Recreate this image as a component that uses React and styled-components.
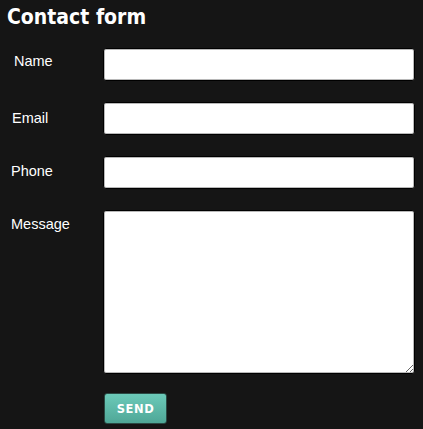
import { Fragment } from "react";
import styled, { createGlobalStyle } from "styled-components";

const Global = createGlobalStyle`
  html, body {
    margin: 0;
    padding: 0;
    background: #151515;
  }
  body {
    font-family: "Liberation Sans", Arial, sans-serif;
    color: #fff;
  }
`;

const Page = styled.div`
  width: 423px;
  height: 429px;
  background: #151515;
  overflow: hidden;
`;

const Title = styled.h1`
  margin: 0;
  padding: 5px 0 0 7px;
  font-family: "DejaVu Sans Condensed", "DejaVu Sans", sans-serif;
  font-stretch: condensed;
  font-weight: 700;
  font-size: 21px;
  line-height: 24px;
  color: #fff;
`;

const Form = styled.form`
  display: grid;
  grid-template-columns: 103px 312px;
  row-gap: 21px;
  padding-top: 19px;
`;

const Label = styled.label`
  font-size: 14.5px;
  color: #fff;
  padding-left: ${(p) => p.$indent}px;
  padding-top: ${(p) => p.$top}px;
`;

const Input = styled.input`
  box-sizing: border-box;
  width: 312px;
  height: 33px;
  margin: 0;
  background: #fff;
  border: 1px solid #000;
  border-radius: 3px;
  box-shadow: inset 0 0 0 1px #b8b8b8;
`;

const TextArea = styled.textarea`
  box-sizing: border-box;
  width: 312px;
  height: 164px;
  margin: 0;
  background: #fff;
  border: 1px solid #000;
  border-radius: 3px;
  box-shadow: inset 0 0 0 1px #b8b8b8;
  resize: vertical;
`;

const Send = styled.button`
  grid-column: 2;
  margin: -2px 0 0 1px;
  width: 63px;
  height: 31px;
  border: 1px solid #2a4a44;
  border-radius: 3px;
  background: linear-gradient(#6ccab9, #4fa797);
  color: #fff;
  font-family: "DejaVu Sans", sans-serif;
  font-weight: 700;
  font-size: 11.5px;
  letter-spacing: 0.6px;
  padding: 0;
  cursor: pointer;
`;

const fields = [
  { label: "Name", indent: 14, top: 5 },
  { label: "Email", indent: 12, top: 8 },
  { label: "Phone", indent: 11, top: 7 },
];

export default function App() {
  return (
    <Page>
      <Global />
      <Title>Contact form</Title>
      <Form onSubmit={(e) => e.preventDefault()}>
        {fields.map((f) => (
          <Fragment key={f.label}>
            <Label $indent={f.indent} $top={f.top}>
              {f.label}
            </Label>
            <Input type="text" />
          </Fragment>
        ))}
        <Label $indent={11} $top={6}>
          Message
        </Label>
        <TextArea />
        <Send type="submit">SEND</Send>
      </Form>
    </Page>
  );
}
